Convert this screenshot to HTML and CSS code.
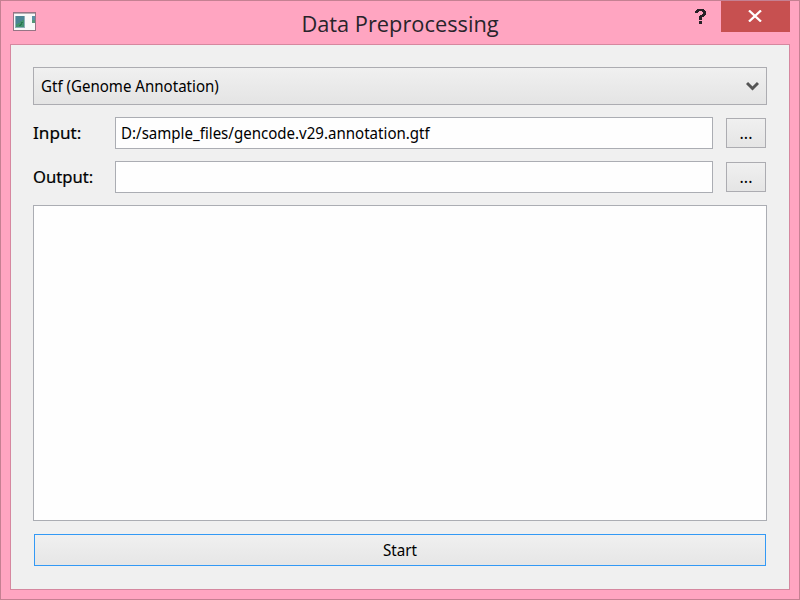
FILE: index.html
```html
<!DOCTYPE html>
<html lang="en">
<head>
<meta charset="utf-8">
<title>Data Preprocessing</title>
<link rel="stylesheet" href="styles.css">
</head>
<body>
<div class="window">
  <header class="titlebar">
    <svg class="app-icon" width="23" height="19" viewBox="0 0 23 19" shape-rendering="crispEdges">
      <rect x=".5" y=".5" width="22" height="18" rx="1" fill="#f8f8f8" stroke="#967585"/>
      <path d="M1 1.5h21" stroke="#b5aeb4"/>
      <rect x="2" y="4" width="10" height="12" fill="#8faeb9"/>
      <rect x="3" y="4" width="8" height="11" fill="#4b8394"/>
      <path d="M3 15v-3h2v-1h2v-2h2v-1h2v7z" fill="#43926f"/>
      <path d="M6 13h1v-1h1v-2h2" fill="none" stroke="#297750"/>
      <rect x="19" y="4" width="3" height="4" fill="#5b91a6"/>
      <rect x="19" y="8" width="3" height="3" fill="#559779"/>
    </svg>
    <h1 class="title">Data Preprocessing</h1>
    <div class="controls">
      <button class="help" aria-label="Help"><svg width="13" height="17" viewBox="0 0 13 17" shape-rendering="crispEdges"><path d="M1 5V3h1V2h1V1h7v1h1v1h1v4h-1v1h-1v1H8v3H5V8h1V7h2V6h1V4H8V3H5v1H4v1zM5 13h3v3H5z" fill="#262126"/></svg></button>
      <button class="close" aria-label="Close"><svg width="14" height="12" viewBox="0 0 14 12"><path d="M1 .5l12 11M13 .5l-12 11" fill="none" stroke="#fff" stroke-width="2.3"/></svg></button>
    </div>
  </header>
  <main class="panel">
    <div class="combo"><span class="fit combo-text">Gtf (Genome Annotation)</span><svg width="13" height="10" viewBox="0 0 13 10"><path d="M1 2L6.5 7.5 12 2" fill="none" stroke="#555" stroke-width="3"/></svg></div>
    <div class="row">
      <span class="label"><span class="fit input-label">Input:</span></span>
      <div class="field"><span class="fit path-text">D:/sample_files/gencode.v29.annotation.gtf</span></div>
      <button class="browse">...</button>
    </div>
    <div class="row">
      <span class="label"><span class="fit output-label">Output:</span></span>
      <div class="field"></div>
      <button class="browse">...</button>
    </div>
    <div class="log"></div>
    <button class="start"><span class="fit start-text">Start</span></button>
  </main>
</div>
</body>
</html>
```

FILE: styles.css
```css
* { box-sizing: border-box; }
body { margin: 0; }
button { padding: 0; border: 0; background: none; color: inherit; font: inherit; }
.window {
  width: 800px;
  height: 600px;
  display: flex;
  flex-direction: column;
  padding: 0 9px 9px;
  border: 1px solid #c58092;
  background: #ffa5c1;
  color: #000;
  font: 16px/20px "Noto Sans", sans-serif;
}
.titlebar {
  height: 43px;
  flex: none;
  display: grid;
  grid-template-columns: 107px 1fr 107px;
  align-items: start;
}
.app-icon { margin: 11px 0 0 3px; }
.title {
  margin: 8px 0 0;
  text-align: center;
  color: #28242b;
  font: 400 21.8px/30px "Open Sans", sans-serif;
}
.fit { display: inline-block; white-space: nowrap; transform-origin: left center; }
.combo-text, .path-text { transform: scaleX(.941); }
.input-label { transform: scaleX(1.07); }
.output-label { transform: scaleX(1.04); }
.input-label, .output-label { -webkit-text-stroke: .2px #000; }
.start-text { transform: scaleX(.95); transform-origin: center; }
.controls { display: flex; justify-content: flex-end; }
.help { width: 13px; height: 17px; margin: 7px 14px 0 0; }
.help svg, .close svg { display: block; }
.close {
  width: 69px;
  height: 31px;
  display: flex;
  align-items: center;
  justify-content: center;
  padding: 0 2px 2px 0;
  background: #c75050;
}
.panel {
  flex: 1;
  display: flex;
  flex-direction: column;
  padding: 22px;
  border: 1px solid #d6879f;
  background: #f0f0f0;
}
.combo {
  height: 38px;
  display: flex;
  align-items: center;
  justify-content: space-between;
  margin-bottom: 12px;
  padding: 0 7px;
  border: 1px solid #acacb1;
  background: linear-gradient(#f0f0f0, #e4e4e4);
}
.row { height: 32px; display: flex; align-items: center; margin-bottom: 12px; }
.label { width: 82px; }
.field {
  width: 598px;
  height: 32px;
  margin-right: 13px;
  padding: 5px;
  border: 1px solid #abadb3;
  background: #fefefe;
}
.browse {
  width: 40px;
  height: 30px;
  border: 1px solid #acacb1;
  background: linear-gradient(#f0f0f0, #e5e5e5);
}
.log { height: 316px; border: 1px solid #abadb3; background: #fefefe; }
.start {
  height: 32px;
  margin: 13px 1px 0;
  border: 1px solid #3399f5;
  background: linear-gradient(#f0f0f0, #e6e6e6);
}
```
